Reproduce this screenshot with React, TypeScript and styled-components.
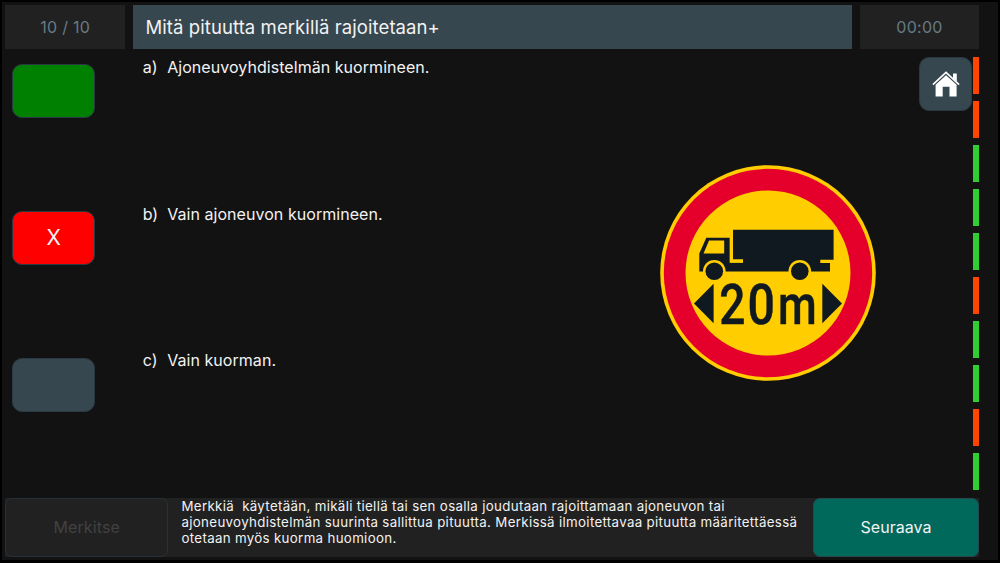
import React from 'react';
import styled, { createGlobalStyle } from 'styled-components';

type AnswerState = 'correct' | 'wrong' | 'idle';

interface Answer {
	id: string;
	text: string;
	state: AnswerState;
}

const answers: Answer[] = [
	{ id: 'a', text: 'Ajoneuvoyhdistelmän kuormineen.', state: 'correct' },
	{ id: 'b', text: 'Vain ajoneuvon kuormineen.', state: 'wrong' },
	{ id: 'c', text: 'Vain kuorman.', state: 'idle' },
];

const results = [false, false, true, true, true, false, true, true, false, true];

const answerColors: Record<AnswerState, string> = {
	correct: '#008000',
	wrong: '#ff0000',
	idle: '#37474f',
};

const GlobalStyle = createGlobalStyle`
	* { box-sizing: border-box; }
	body {
		margin: 0;
		background: #121212;
		color: #f2f2f2;
		font-family: Inter, "Liberation Sans", sans-serif;
	}
	button {
		font: inherit;
		color: inherit;
		padding: 0;
	}
`;

const Page = styled.div`
	width: 1000px;
	height: 563px;
	display: flex;
	flex-direction: column;
	padding: 3px 19px 3px 3.4px;
	border: 2px solid #000;
	border-bottom-width: 3px;
	overflow: hidden;
`;

const Header = styled.header`
	display: grid;
	grid-template-columns: 119.6px 719px 119px;
	gap: 8px;
	height: 44.4px;
	flex: none;
`;

const Counter = styled.div`
	display: flex;
	align-items: center;
	justify-content: center;
	background: #212121;
	color: #667b86;
	font-size: 16px;
	letter-spacing: 0.3px;
`;

const Question = styled.h1`
	display: flex;
	align-items: center;
	margin: 0;
	padding-left: 12.5px;
	background: #37474f;
	font-size: 18.5px;
	font-weight: 400;
	letter-spacing: 0.08px;
`;

const Body = styled.main`
	display: flex;
	height: 448.6px;
	flex: none;
`;

const Answers = styled.div`
	width: 654.6px;
	padding: 15px 0 0 7px;
`;

const AnswerRow = styled.div`
	display: flex;
	height: 146.6px;
`;

const AnswerButton = styled.button<{ $state: AnswerState }>`
	width: 82.5px;
	height: 54px;
	background: ${p => answerColors[p.$state]};
	border: 1px solid #2b3a42;
	border-radius: 10px;
	font-size: 21px;
`;

const AnswerLabel = styled.span`
	width: 24.5px;
	margin-left: 47.8px;
	font-size: 16px;
	line-height: 20px;
	margin-top: -7.3px;
`;

const AnswerText = styled.span`
	font-size: 16px;
	line-height: 20px;
	margin-top: -7.3px;
	letter-spacing: 0.05px;
`;

const Picture = styled.div`
	width: 216px;
	padding-top: 115.6px;
	svg { display: block; }
`;

const HomeButton = styled.button`
	width: 53.5px;
	height: 54px;
	margin: 8px 0 0 43px;
	display: flex;
	align-items: center;
	justify-content: center;
	background: #37474f;
	border: 1px solid #2b3a42;
	border-radius: 10px;
`;

const Progress = styled.div`
	display: flex;
	flex-direction: column;
	gap: 7.3px;
	padding-top: 7.6px;
	margin-left: 0.5px;
`;

const ProgressMark = styled.div<{ $ok: boolean }>`
	width: 6px;
	height: 36.7px;
	background: ${p => p.$ok ? '#32cd32' : '#ff4500'};
`;

const Footer = styled.footer`
	display: flex;
	height: 59.5px;
	flex: none;
	background: #212121;
`;

const MarkButton = styled.button`
	width: 162.6px;
	height: 59px;
	background: none;
	border: 1px solid #263238;
	border-radius: 7px;
	color: #424242;
	font-size: 16px;
	letter-spacing: 0.1px;
`;

const Explanation = styled.p`
	flex: 1;
	margin: 0;
	padding-left: 13.5px;
	font-size: 13.3px;
	line-height: 16px;
	letter-spacing: 0.325px;
	white-space: pre;
`;

const NextButton = styled.button`
	width: 166px;
	height: 59px;
	background: #00695c;
	border: 1px solid #27484d;
	border-radius: 7px;
	font-size: 16px;
	letter-spacing: 0.05px;
`;

function HomeIcon() {
	return (
		<svg width="28" height="27" viewBox="0 0 28 27">
			<path d="M.9 13.6 14 1.3 27.1 13.6" fill="none" stroke="#fff" strokeWidth="1.7" />
			<path d="M21 2.4h3.8v8.4L21 7.2z" fill="#fff" />
			<path d="M3.6 13.8 14 4.2l10.6 9.6v11.7h-7.1v-9.8h-6.8v9.8H3.6z" fill="#fff" />
		</svg>
	);
}

function LengthLimitSign() {
	return (
		<svg width="216" height="216" viewBox="0 0 216 216" fill="#101920">
			<circle cx="108" cy="108" r="107.8" fill="#ffcd00" />
			<circle cx="108" cy="108" r="104.2" fill="#e4002b" />
			<circle cx="108" cy="108" r="82.5" fill="#ffcd00" />
			{/* cab, chassis and cargo box */}
			<path d="M39.3 106V88.5L46.3 72.8H69.8V97.5H83V94.5H73V64.8H173.6V94.8H160.3V98H170V106.5H39.3Z" />
			<path d="M43.5 88.5 49 75.5H64.2V88.5Z" fill="#ffcd00" />
			<path d="M69.8 64H73V94.5H83V97.7H69.8Z" fill="#ffcd00" />
			<circle cx="54.3" cy="106.3" r="11.3" fill="#ffcd00" />
			<circle cx="139.8" cy="106.3" r="11.3" fill="#ffcd00" />
			<circle cx="54.3" cy="106.3" r="8.8" />
			<circle cx="139.8" cy="106.3" r="8.8" />
			<path d="M34 138.5 53.6 118.8V158.3Z" />
			<path d="M182 138.5 162.3 118.8V158.3Z" />
			<g fontFamily="Roboto, sans-serif" fontWeight="500" fontSize="55.5" stroke="#101920" strokeWidth="0.5">
				<text transform="translate(59.3 158.8) scale(.83 1)">2</text>
				<text transform="translate(87.6 158.8) scale(.87 1)">0</text>
				<text transform="translate(118.1 158.8) scale(.8 1)">m</text>
			</g>
		</svg>
	);
}

export default function App() {
	return (
		<Page>
			<GlobalStyle />
			<Header>
				<Counter>10 / 10</Counter>
				<Question>Mitä pituutta merkillä rajoitetaan+</Question>
				<Counter>00:00</Counter>
			</Header>
			<Body>
				<Answers>
					{answers.map(a => (
						<AnswerRow key={a.id}>
							<AnswerButton $state={a.state}>{a.state === 'wrong' && 'X'}</AnswerButton>
							<AnswerLabel>{a.id})</AnswerLabel>
							<AnswerText>{a.text}</AnswerText>
						</AnswerRow>
					))}
				</Answers>
				<Picture>
					<LengthLimitSign />
				</Picture>
				<HomeButton aria-label="Koti">
					<HomeIcon />
				</HomeButton>
				<Progress>
					{results.map((ok, i) => <ProgressMark key={i} $ok={ok} />)}
				</Progress>
			</Body>
			<Footer>
				<MarkButton disabled>Merkitse</MarkButton>
				<Explanation>
					{'Merkkiä  käytetään, mikäli tiellä tai sen osalla joudutaan rajoittamaan ajoneuvon tai\n'}
					{'ajoneuvoyhdistelmän suurinta sallittua pituutta. Merkissä ilmoitettavaa pituutta määritettäessä\n'}
					{'otetaan myös kuorma huomioon.'}
				</Explanation>
				<NextButton>Seuraava</NextButton>
			</Footer>
		</Page>
	);
}
